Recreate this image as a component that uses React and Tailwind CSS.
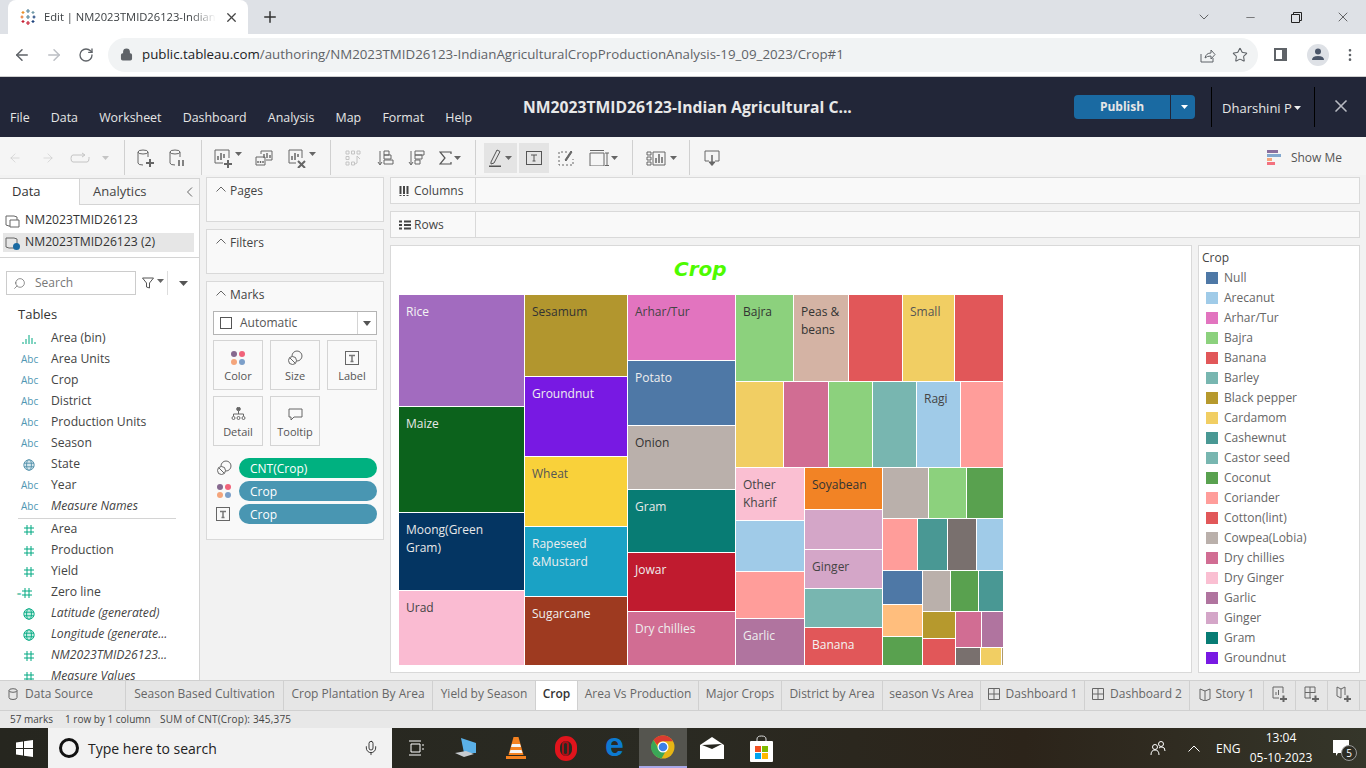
import { Minus, X, ChevronDown, ArrowLeft, ArrowRight, RotateCw, Lock, Star, MoreVertical, Plus, Search, Mic } from "lucide-react";

/* ---------- Treemap data ---------- */
const col1 = [
  { t: "Rice", c: "h-[111px] bg-[#a26bbf] text-[#f4f4f4]" },
  { t: "Maize", c: "h-[105px] bg-[#0c621c] text-[#e8e8e8]" },
  { t: "Moong(Green Gram)", c: "h-[77px] bg-[#043562] text-[#e8e8e8]" },
  { t: "Urad", c: "h-[74px] bg-[#fabbd2] text-[#444]" },
];
const col2 = [
  { t: "Sesamum", c: "h-[81px] bg-[#b2962e] text-[#333]" },
  { t: "Groundnut", c: "h-[79px] bg-[#7819e3] text-[#eee]" },
  { t: "Wheat", c: "h-[69px] bg-[#f9d13a] text-[#555]" },
  { t: "Rapeseed &Mustard", c: "h-[69px] bg-[#1aa2c5] text-[#eee]" },
  { t: "Sugarcane", c: "h-[68px] bg-[#9e3a20] text-[#eee]" },
];
const col3 = [
  { t: "Arhar/Tur", c: "h-[65px] bg-[#e274bf] text-[#444]" },
  { t: "Potato", c: "h-[64px] bg-[#4e78a6] text-[#eee]" },
  { t: "Onion", c: "h-[63px] bg-[#bab0ab] text-[#333]" },
  { t: "Gram", c: "h-[62px] bg-[#087c74] text-[#e8e8e8]" },
  { t: "Jowar", c: "h-[58px] bg-[#c01b2f] text-[#eee]" },
  { t: "Dry chillies", c: "h-[53px] bg-[#d16d93] text-[#eee]" },
];
const row1 = [
  { t: "Bajra", c: "w-[57px] bg-[#8cd17d] text-[#333]" },
  { t: "Peas & beans", c: "w-[54px] bg-[#d4b3a4] text-[#333]" },
  { t: "", c: "w-[53px] bg-[#e15759]" },
  { t: "Small", c: "w-[51px] bg-[#f1ce63] text-[#555]" },
  { t: "", c: "w-[48px] bg-[#e15759]" },
];
const row2 = [
  { t: "", c: "w-[47px] bg-[#f1ce63]" },
  { t: "", c: "w-[44px] bg-[#d16d93]" },
  { t: "", c: "w-[43px] bg-[#8cd17d]" },
  { t: "", c: "w-[43px] bg-[#78b6b0]" },
  { t: "Ragi", c: "w-[43px] bg-[#a0cbe8] text-[#444]" },
  { t: "", c: "w-[42px] bg-[#ff9d9a]" },
];
const colA = [
  { t: "Other Kharif", c: "h-[52px] bg-[#fabfd2] text-[#444]" },
  { t: "", c: "h-[50px] bg-[#a0cbe8]" },
  { t: "", c: "h-[46px] bg-[#ff9d9a]" },
  { t: "Garlic", c: "h-[46px] bg-[#b0749f] text-[#eee]" },
];
const colB = [
  { t: "Soyabean", c: "h-[41px] bg-[#f28325] text-[#333]" },
  { t: "", c: "h-[39px] bg-[#d4a6c8]" },
  { t: "Ginger", c: "h-[38px] bg-[#d4a6c8] text-[#444]" },
  { t: "", c: "h-[38px] bg-[#78b6b0]" },
  { t: "Banana", c: "h-[37px] bg-[#e15759] text-[#f4f4f4]" },
];

/* ---------- Legend + field list ---------- */
const legend = [
  ["Null", "bg-[#4e78a6]"], ["Arecanut", "bg-[#a0cbe8]"], ["Arhar/Tur", "bg-[#e274bf]"], ["Bajra", "bg-[#8cd17d]"],
  ["Banana", "bg-[#e15759]"], ["Barley", "bg-[#78b6b0]"], ["Black pepper", "bg-[#b6992d]"], ["Cardamom", "bg-[#f1ce63]"],
  ["Cashewnut", "bg-[#499894]"], ["Castor seed", "bg-[#78b6b0]"], ["Coconut", "bg-[#59a14f]"], ["Coriander", "bg-[#ff9d9a]"],
  ["Cotton(lint)", "bg-[#e15759]"], ["Cowpea(Lobia)", "bg-[#bab0ab]"], ["Dry chillies", "bg-[#d16d93]"], ["Dry Ginger", "bg-[#fabfd2]"],
  ["Garlic", "bg-[#b0749f]"], ["Ginger", "bg-[#d4a6c8]"], ["Gram", "bg-[#087c74]"], ["Groundnut", "bg-[#7819e3]"],
];
const dims = [
  ["bin", "Area (bin)"], ["abc", "Area Units"], ["abc", "Crop"], ["abc", "District"], ["abc", "Production Units"],
  ["abc", "Season"], ["globe", "State"], ["abc", "Year"], ["abc", "Measure Names", true],
];
const measures = [
  ["hash", "Area"], ["hash", "Production"], ["hash", "Yield"], ["calc", "Zero line"],
  ["globeg", "Latitude (generated)", true], ["globeg", "Longitude (generate...", true],
  ["hash", "NM2023TMID26123...", true], ["hash", "Measure Values", true],
];
const sheetTabs = [
  ["Season Based Cultivation", "w-[158px]"], ["Crop Plantation By Area", "w-[149px]"], ["Yield by Season", "w-[103px]"],
  ["Crop", "w-[42px]", true], ["Area Vs Production", "w-[121px]"], ["Major Crops", "w-[83px]"],
  ["District by Area", "w-[101px]"], ["season Vs Area", "w-[98px]"],
];

/* ---------- Small drawings ---------- */
const Tile = ({ t, c }) => (
  <div className={`${c} px-[7px] pt-2 text-[12px] leading-[18px] overflow-hidden`}>{t}</div>
);
const Block = ({ c }) => <div className={c} />;
const Caret = ({ c = "fill-[#666]" }) => (
  <svg width="7" height="4" viewBox="0 0 7 4" className="ml-[2px]"><path d="M0 0h7L3.5 4z" className={c} /></svg>
);
const Sep = () => <div className="w-px h-[35px] self-end bg-[#d0d0d0]" />;
const Slot = ({ w, children }) => <div className={`${w} flex justify-center items-center`}>{children}</div>;
const Ico = ({ w = 20, h = 20, v, s = "#666", children }) => (
  <svg width={w} height={h} viewBox={v || `0 0 ${w} ${h}`} fill="none" stroke={s} strokeWidth="1">{children}</svg>
);
const Dots = () => (
  <svg width="16" height="16" viewBox="0 0 16 16">
    <circle cx="4" cy="4" r="3" fill="#86698f" /><circle cx="12" cy="4" r="3" fill="#f1637a" />
    <circle cx="4" cy="12" r="3" fill="#f4a57c" /><circle cx="12" cy="12" r="3" fill="#7c9fc9" />
  </svg>
);
const SizeIco = () => (
  <Ico w={16} h={16}>
    <circle cx="10" cy="6" r="5" /><circle cx="5.5" cy="10.5" r="4" fill="#f9f9f9" /><path d="M3 8l5 5" />
  </Ico>
);
const TIco = () => (
  <Ico w={15} h={15}>
    <rect x=".5" y=".5" width="13" height="13" /><path d="M4 4.5h6M7 4.5v6M5.5 10.5h3" strokeWidth="1.5" stroke="#777" />
  </Ico>
);
const Hash = ({ c = "#00a881" }) => (
  <Ico w={10} h={10} s={c}><path d="M3 0v10M7 0v10M0 3h10M0 7h10" /></Ico>
);
const Globe = ({ c, f }) => (
  <svg width="12" height="12" viewBox="0 0 12 12" fill={f} stroke={c} strokeWidth=".9">
    <circle cx="6" cy="6" r="5.2" /><ellipse cx="6" cy="6" rx="2.4" ry="5.2" /><path d="M1 4.2h10M1 7.8h10" />
  </svg>
);
const FieldIcon = ({ k }) => {
  if (k === "abc") return <span className="text-[10px] text-[#4f97b3] w-4 text-center">Abc</span>;
  if (k === "globe") return <Globe c="#4f8fa9" f="#d8e8ee" />;
  if (k === "globeg") return <Globe c="#00a881" f="#c8efe4" />;
  if (k === "bin")
    return <Ico w={14} h={10} s="#00a881"><path d="M1 10V8M4 10V5M7 10V1M10 10V4M13 10V8" /></Ico>;
  if (k === "calc")
    return (
      <span className="flex items-center -ml-[9px]">
        <span className="text-[8px] leading-none text-[#00a881] mr-[1px]">=</span><Hash />
      </span>
    );
  return <Hash />;
};
const Chevron = () => (
  <svg width="10" height="6" viewBox="0 0 10 6" fill="none" stroke="#666" strokeWidth="1"><path d="M.5 5.5L5 1l4.5 4.5" /></svg>
);
const CylPlus = ({ mark }) => (
  <Ico w={18} h={18}>
    <ellipse cx="6" cy="3" rx="5" ry="2" /><path d="M1 3v11q0 2 5 2M11 3v5" />
    {mark === "plus" && <path d="M9 14h8M13 10v8" strokeWidth="2" />}
    {mark === "pause" && <path d="M10 11v6M14 11v6" strokeWidth="1.6" />}
  </Ico>
);
const Favicon = () => (
  <svg width="16" height="16" viewBox="0 0 16 16" strokeWidth="1.2" fill="none">
    <path d="M8 0v4M6 2h4" stroke="#5b879b" /><path d="M3 2v3M1.5 3.5h3" stroke="#eb912b" /><path d="M13 2v3M11.5 3.5h3" stroke="#7099a6" />
    <path d="M8 6v4M6 8h4" stroke="#59879b" /><path d="M2 6.5v3M.5 8h3" stroke="#e8762b" /><path d="M14 6.5v3M12.5 8h3" stroke="#1f447e" />
    <path d="M3 11v3M1.5 12.5h3" stroke="#c72035" /><path d="M8 12v4M6 14h4" stroke="#c72035" /><path d="M13 11v3M11.5 12.5h3" stroke="#1f447e" />
  </svg>
);
const MiniTab = ({ children }) => (
  <div className="w-[32px] h-full pb-[3px] flex items-center justify-center border-r border-[#d0d0d0]">{children}</div>
);
const TaskSlot = ({ w = "w-[49px]", c = "", children }) => (
  <div className={`${w} ${c} h-full flex items-center justify-center`}>{children}</div>
);

export default function App() {
  return (
    <div className="w-[1366px] h-[768px] overflow-hidden flex flex-col bg-white font-['Open_Sans',sans-serif]">

      {/* Browser tabs */}
      <div className="h-[34px] bg-[#dee1e6] flex items-end shrink-0">
        <div className="ml-2 w-[240px] h-full bg-white rounded-t-lg flex items-center pl-3 text-[#3c4043]">
          <Favicon />
          <span className="ml-2 w-[172px] overflow-hidden whitespace-nowrap text-[11.2px] [mask-image:linear-gradient(to_right,black_85%,transparent)]">
            Edit | NM2023TMID26123-Indian Agricultural
          </span>
          <X size={15} strokeWidth={2} className="ml-2 text-[#444]" />
        </div>
        <Plus size={18} strokeWidth={2} className="ml-[13px] mb-2 text-[#333]" />
        <div className="ml-auto h-full flex items-center text-[#222]">
          <ChevronDown size={16} strokeWidth={1} className="mr-[32px]" />
          <Minus size={13} strokeWidth={1} className="mr-[34px]" />
          <svg width="11" height="11" viewBox="0 0 11 11" fill="none" stroke="#222" className="mr-[33px]">
            <path d="M.5 2.5h8v8h-8zM2.5 2.5v-2h8v8h-2" />
          </svg>
          <X size={16} strokeWidth={1} className="mr-[15px]" />
        </div>
      </div>

      {/* Address bar */}
      <div className="h-[43px] bg-white border-b border-[#cfcfcf] flex items-center shrink-0 pb-[1px]">
        <ArrowLeft size={18} strokeWidth={2} className="ml-[13px] text-[#5f6368]" />
        <ArrowRight size={18} strokeWidth={2} className="ml-[14px] text-[#bcbfc4]" />
        <RotateCw size={16} strokeWidth={2} className="ml-[15px] text-[#5f6368]" />
        <div className="ml-[14px] w-[1150px] h-[34px] rounded-full bg-[#f1f3f4] flex items-center pl-[12px]">
          <Lock size={13} strokeWidth={2.5} className="text-[#5f6368] fill-[#5f6368]" />
          <span className="ml-[9px] text-[13.3px] whitespace-nowrap text-[#5f6368]">
            <span className="text-[#202124]">public.tableau.com</span>/authoring/NM2023TMID26123-IndianAgriculturalCropProductionAnalysis-19_09_2023/Crop#1
          </span>
          <div className="ml-auto flex items-center pr-[10px]">
            <Ico w={16} h={16} s="#5f6368"><path d="M1 7v8h12v-4M5 11q1-5 6-5V3l4 4.5-4 4.5V9q-4 0-6 2z" /></Ico>
            <Star size={16} strokeWidth={1.6} className="ml-[16px] text-[#5f6368]" />
          </div>
        </div>
        <div className="ml-[16px] w-[13px] h-[13px] border-2 border-[#5f6368] border-r-[5px]" />
        <div className="ml-[20px] w-[22px] h-[22px] rounded-full bg-[#dee1e6] flex items-center justify-center">
          <svg width="12" height="13" viewBox="0 0 12 13" fill="#4a5568"><circle cx="6" cy="3.5" r="3" /><path d="M0 12q0-4 6-4t6 4z" /></svg>
        </div>
        <MoreVertical size={16} strokeWidth={2} className="ml-[13px] text-[#5f6368]" />
      </div>

      {/* Tableau header */}
      <div className="h-[60px] bg-[#222638] flex shrink-0">
        <div className="w-[523px] pl-[10px] pt-[33px] flex gap-[21.2px] text-[12.4px] leading-4 text-[#e6e6e6]">
          {["File", "Data", "Worksheet", "Dashboard", "Analysis", "Map", "Format", "Help"].map((m) => (
            <span key={m}>{m}</span>
          ))}
        </div>
        <div className="w-[551px] pt-[20px] text-[15.7px] leading-5 font-bold text-[#e8e8e8] whitespace-nowrap">
          NM2023TMID26123-Indian Agricultural C...
        </div>
        <div className="flex items-start text-[#e6e6e6]">
          <div className="mt-[18px] w-[96px] h-6 bg-[#1a6aa2] rounded-l-sm flex items-center justify-center text-[12px] font-bold">
            Publish
          </div>
          <div className="mt-[18px] ml-px w-6 h-6 bg-[#1a6aa2] rounded-r-sm flex items-center justify-center">
            <Caret c="fill-white" />
          </div>
          <div className="mt-[10px] ml-4 w-px h-10 bg-black" />
          <div className="mt-[23px] ml-[10px] w-[92px] flex items-center text-[13px] leading-4 whitespace-nowrap">
            Dharshini P<Caret c="fill-[#eee]" />
          </div>
          <div className="mt-[10px] w-px h-10 bg-black" />
          <X size={20} strokeWidth={2} className="mt-[19px] ml-[16px] text-[#b8bac2]" />
        </div>
      </div>

      {/* Toolbar */}
      <div className="h-[38px] pt-[4px] bg-[#f5f5f5] flex items-center shrink-0">
        <Slot w="w-[30px]"><ArrowLeft size={14} strokeWidth={1} className="text-[#c4c4c4]" /></Slot>
        <Slot w="w-[36px]"><ArrowRight size={14} strokeWidth={1} className="text-[#c4c4c4]" /></Slot>
        <Slot w="w-[28px]">
          <Ico w={20} h={12} s="#c4c4c4"><path d="M14 3H3q-2 0-2 3.500t2 3.500h14q2 0 2-3.500V5M12 1l3 2-3 2" /></Ico>
        </Slot>
        <Slot w="w-[20px]"><Caret c="fill-[#c4c4c4]" /></Slot>
        <div className="w-[10px]" /><Sep />
        <Slot w="w-[42px]"><CylPlus mark="plus" /></Slot>
        <Slot w="w-[22px]"><CylPlus mark="pause" /></Slot>
        <div className="w-[12px]" /><Sep />
        <Slot w="w-[52px]">
          <Ico w={19} h={19}><path d="M9 14H1V1h14v8" /><path d="M4 11V7M7 11V4M10 9V5" strokeWidth="1.500" /><path d="M10 15h8M14 11v8" strokeWidth="2" /></Ico>
          <span className="-mt-2"><Caret /></span>
        </Slot>
        <Slot w="w-[20px]">
          <Ico w={18} h={16}><path d="M6 4V1h11v9H11" /><path d="M1 7h9v8H1z" /><path d="M9 8V4M12 8V3M15 8V5M3 13v-2M5.500 13v-2M8 13v-2" strokeWidth="1.400" /></Ico>
        </Slot>
        <Slot w="w-[56px]">
          <Ico w={19} h={19}><path d="M8 14H1V1h13v8" /><path d="M4 11V7M7 11V4M10 8V5" strokeWidth="1.500" /><path d="M10 12l7 7M17 12l-7 7" strokeWidth="2" /></Ico>
          <span className="-mt-2"><Caret /></span>
        </Slot>
        <Sep />
        <Slot w="w-[44px]">
          <Ico w={17} h={16} s="#c4c4c4"><path d="M1 1h3v3H1zM6.500 1h3v3h-3zM12 1h3v3h-3zM1 6.500h3v3H1zM1 12h3v3H1zM6.500 12h3v3h-3zM12 6v7l-2 1M15 9l-3-3" /></Ico>
        </Slot>
        <Slot w="w-[20px]">
          <Ico w={17} h={16}><path d="M3 1v13M1 12l2 3 2-3" /><path d="M7 1h5v4H7zM7 5h7v4H7zM7 10h9v4H7z" /></Ico>
        </Slot>
        <Slot w="w-[43px]">
          <Ico w={17} h={16}><path d="M3 1v13M1 12l2 3 2-3" /><path d="M7 1h9v4H7zM7 5h7v4H7zM7 10h5v4H7z" /></Ico>
        </Slot>
        <Slot w="w-[24px]">
          <Ico w={13} h={14} s="#555"><path d="M12 3V1H1l5 6-5 6h11v-2" strokeWidth="1.200" /></Ico>
          <Caret />
        </Slot>
        <div className="w-[13px]" /><Sep />
        <div className="ml-2 w-[33px] h-[30px] bg-[#e4e4e4] flex items-center justify-center">
          <Ico w={14} h={18} s="#555"><path d="M2 13L8 1l3 1.500L5 14l-3 1z" /><path d="M0 17.500h12" strokeWidth="2" /></Ico>
          <Caret />
        </div>
        <div className="ml-[2px] w-[30px] h-[30px] bg-[#e4e4e4] flex items-center justify-center">
          <Ico w={16} h={14} s="#555"><rect x=".5" y=".5" width="15" height="13" /><path d="M5 4h6M8 4v6M6.500 10h3" /></Ico>
        </div>
        <Slot w="w-[34px]">
          <Ico w={16} h={16} s="#666"><path d="M9 2H1v13h14V9" strokeDasharray="2 2" /><path d="M7 10l6-9 1 1-6 9z" fill="#666" /></Ico>
        </Slot>
        <Slot w="w-[40px]">
          <Ico w={20} h={16}><path d="M1 3h14v13H1zM1 .5h14M18 3v13M16 3h4M16 15.500h4" /></Ico>
          <Caret />
        </Slot>
        <div className="w-[9px]" /><Sep />
        <Slot w="w-[56px]">
          <Ico w={20} h={15}><path d="M1 1h4v3H1zM1 6h4v3H1zM1 11h4v3H1zM7 1h12v13H7z" /><path d="M10 12V7M13 12V3M16 12V6" strokeWidth="1.500" /></Ico>
          <span className="ml-[2px]"><Caret /></span>
        </Slot>
        <Sep />
        <Slot w="w-[44px]">
          <Ico w={16} h={16}><path d="M5 11H1V1h14v10h-4" /><path d="M8 5v10" strokeWidth="1.500" /><path d="M5 12l3 3.500 3-3.500z" fill="#666" /></Ico>
        </Slot>
        <div className="ml-auto mr-6 flex items-center">
          <svg width="14" height="16" viewBox="0 0 14 16" className="mr-[10px]">
            <rect width="11" height="3" fill="#8a6f9e" /><rect y="4" width="14" height="3" fill="#83a8cf" />
            <rect y="8" width="5" height="3" fill="#f4a57c" /><rect y="12" width="8" height="3" fill="#f3717f" />
          </svg>
          <span className="text-[12px] text-[#555]">Show Me</span>
        </div>
      </div>

      {/* Workspace */}
      <div className="flex-1 min-h-0 flex bg-[#f2f2f2]">

        {/* Data pane */}
        <div className="w-[200px] mt-[3px] bg-white border-r border-t border-[#d4d4d4] flex flex-col overflow-hidden shrink-0">
          <div className="h-[26px] flex shrink-0 text-[13px]">
            <div className="w-[79px] pl-3 flex items-center text-[#333] font-medium">Data</div>
            <div className="flex-1 bg-[#f5f5f5] border-l border-b border-[#d4d4d4] pl-[13px] flex items-center text-[#444]">
              Analytics
              <svg width="6" height="10" viewBox="0 0 6 10" fill="none" stroke="#666" className="ml-auto mr-[6px]"><path d="M5 .5L.5 5 5 9.500" /></svg>
            </div>
          </div>
          <div className="h-[53px] border-b border-[#d4d4d4] pt-[6px] pl-[3px] pr-[5px] shrink-0 text-[12.2px] text-[#333]">
            <div className="h-[19px] flex items-center pl-[2px] mb-[3px]">
              <Ico w={15} h={15}><path d="M1 3h8l3 1v9H4l-3-1z" /><path d="M5 7h9v7H5z" fill="#fff" /></Ico>
              <span className="ml-[5px]">NM2023TMID26123</span>
            </div>
            <div className="h-[19px] bg-[#e6e6e6] flex items-center pl-[2px] relative">
              <Ico w={15} h={15}><path d="M1 3h8l3 1v9H4l-3-1z" /></Ico>
              <span className="absolute left-[10px] top-[10px] w-[7px] h-[7px] rounded-full bg-[#1a6aa2]" />
              <span className="ml-[5px]">NM2023TMID26123 (2)</span>
            </div>
          </div>
          <div className="flex items-center pl-[6px] mt-[13px] shrink-0">
            <div className="w-[130px] h-6 border border-[#ccc] flex items-center pl-[6px] text-[12px] text-[#777]">
              <Search size={13} strokeWidth={1.200} className="-scale-x-100 text-[#555]" />
              <span className="ml-[9px]">Search</span>
            </div>
            <span className="ml-[6px] flex items-center">
              <Ico w={13} h={12} s="#555"><path d="M.5 1h11L7.500 6v5l-3-1V6z" /></Ico>
              <span className="-mt-1"><Caret /></span>
            </span>
            <div className="ml-[3px] w-px h-6 bg-[#ddd]" />
            <span className="ml-[11px]"><svg width="9" height="5" viewBox="0 0 9 5"><path d="M0 0h9L4.500 5z" fill="#555" /></svg></span>
          </div>
          <div className="pl-[18px] mt-[9px] text-[13px] leading-5 text-[#333] font-medium shrink-0">Tables</div>
          <div className="mt-[4px] text-[12.2px] text-[#444] shrink-0">
            {dims.map(([k, name, it]) => (
              <div key={name} className="h-[21px] flex items-center">
                <div className="w-[51px] pl-[21px] pr-[14px] flex justify-center items-center"><FieldIcon k={k} /></div>
                <span className={it ? "italic" : ""}>{name}</span>
              </div>
            ))}
            <div className="ml-[18px] mr-[23px] mt-[1px] h-px bg-[#d4d4d4]" />
            {measures.map(([k, name, it]) => (
              <div key={name} className="h-[21px] flex items-center">
                <div className="w-[51px] pl-[21px] pr-[14px] flex justify-center items-center"><FieldIcon k={k} /></div>
                <span className={it ? "italic" : ""}>{name}</span>
              </div>
            ))}
          </div>
        </div>

        {/* Cards */}
        <div className="w-[178px] ml-[6px] mt-[2px] flex flex-col gap-[7px] text-[12px] text-[#555] shrink-0">
          {["Pages", "Filters"].map((n) => (
            <div key={n} className="h-[45px] bg-[#f9f9f9] border border-[#d9d9d9] pl-[9px] pt-[3px] flex items-start">
              <span className="mt-[5px]"><Chevron /></span>
              <span className="ml-[4px] text-[#444] leading-5">{n}</span>
            </div>
          ))}
          <div className="h-[259px] bg-[#f9f9f9] border border-[#d9d9d9] px-[6px] pt-[3px]">
            <div className="flex items-start pl-[3px]">
              <span className="mt-[5px]"><Chevron /></span>
              <span className="ml-[4px] text-[#444] leading-5">Marks</span>
            </div>
            <div className="mt-[6px] h-6 border border-[#b4b4b4] bg-white flex items-center pl-[6px]">
              <div className="w-3 h-3 border border-[#555]" />
              <span className="ml-2 text-[#555]">Automatic</span>
              <div className="ml-auto w-[19px] h-full border-l border-[#d4d4d4] flex items-center justify-center">
                <svg width="8" height="5" viewBox="0 0 8 5"><path d="M0 0h8L4 5z" fill="#555" /></svg>
              </div>
            </div>
            <div className="mt-[5px] grid grid-cols-[50px_50px_50px] gap-x-[7px] gap-y-[6px] text-[11px]">
              {[
                ["Color", <Dots key="a" />], ["Size", <SizeIco key="b" />], ["Label", <TIco key="c" />],
                ["Detail", <svg key="d" width="15" height="14" viewBox="0 0 15 14" fill="none" stroke="#666"><circle cx="7.500" cy="2" r="1.800" fill="#666" /><path d="M7.500 4v3M2.500 9V7h10v2" /><circle cx="2.500" cy="11" r="1.500" /><circle cx="7.500" cy="11" r="1.500" /><circle cx="12.500" cy="11" r="1.500" /></svg>],
                ["Tooltip", <Ico key="e" w={15} h={13}><path d="M1 1h13v8H6l-3 3V9H1z" /></Ico>],
              ].map(([l, ic]) => (
                <div key={l} className="h-[50px] border border-[#d4d4d4] flex flex-col items-center">
                  <div className="h-[18px] mt-2 flex items-center">{ic}</div>
                  <span className="mt-[1px] leading-4 text-[#555]">{l}</span>
                </div>
              ))}
            </div>
            <div className="mt-3 flex flex-col gap-[3px] text-white">
              {[
                [<SizeIco key="a" />, "CNT(Crop)", "bg-[#00b180]"],
                [<Dots key="b" />, "Crop", "bg-[#4996b2]"],
                [<TIco key="c" />, "Crop", "bg-[#4996b2]"],
              ].map(([ic, l, c], i) => (
                <div key={i} className="flex items-center">
                  <div className="w-[26px] flex justify-start pl-[3px]">{ic}</div>
                  <div className={`${c} w-[138px] h-5 rounded-full pl-[11px] pt-[1px] flex items-center`}>{l}</div>
                </div>
              ))}
            </div>
          </div>
        </div>

        {/* Shelves and view */}
        <div className="w-[970px] ml-[6px] mt-[2px] flex flex-col text-[12px] text-[#444] shrink-0">
          <div className="h-[27px] bg-[#f9f9f9] border border-[#d9d9d9] flex items-center">
            <div className="w-[85px] h-full border-r border-[#d9d9d9] pl-2 flex items-center">
              <Ico w={10} h={10} s="#444"><path d="M1.500 0v10M5 0v10M8.500 0v10" strokeWidth="2" strokeDasharray="8 1" /></Ico>
              <span className="ml-[5px]">Columns</span>
            </div>
          </div>
          <div className="mt-[7px] h-[27px] bg-[#f9f9f9] border border-[#d9d9d9] flex items-center">
            <div className="w-[85px] h-full border-r border-[#d9d9d9] pl-2 flex items-center">
              <Ico w={12} h={10} s="#444"><path d="M0 1.500h3M5 1.500h7M0 5h3M5 5h7M0 8.500h3M5 8.500h7" strokeWidth="2" /></Ico>
              <span className="ml-[3px]">Rows</span>
            </div>
          </div>

          <div className="mt-[7px] h-[428px] flex gap-[6px]">
            <div className="w-[802px] bg-white border border-[#d9d9d9] pl-2 flex flex-col">
              <div className="h-[49px] pl-[275px] pt-[9px] text-[20px] leading-7 font-bold italic text-[#4efb00] font-['DejaVu_Sans',sans-serif]">
                Crop
              </div>
              <div className="w-[604px] h-[370px] flex gap-px">
                <div className="w-[125px] flex flex-col gap-px">{col1.map((d, i) => <Tile key={i} {...d} />)}</div>
                <div className="w-[102px] flex flex-col gap-px">{col2.map((d, i) => <Tile key={i} {...d} />)}</div>
                <div className="w-[107px] flex flex-col gap-px">{col3.map((d, i) => <Tile key={i} {...d} />)}</div>
                <div className="w-[267px] flex flex-col gap-px">
                  <div className="h-[86px] flex gap-px">{row1.map((d, i) => <Tile key={i} {...d} />)}</div>
                  <div className="h-[85px] flex gap-px">{row2.map((d, i) => <Tile key={i} {...d} />)}</div>
                  <div className="h-[197px] flex gap-px">
                    <div className="w-[68px] flex flex-col gap-px">{colA.map((d, i) => <Tile key={i} {...d} />)}</div>
                    <div className="w-[77px] flex flex-col gap-px">{colB.map((d, i) => <Tile key={i} {...d} />)}</div>
                    <div className="w-[120px] flex flex-col gap-px">
                      <div className="h-[50px] flex gap-px">
                        <Block c="w-[45px] bg-[#bab0ab]" /><Block c="w-[37px] bg-[#8cd17d]" /><Block c="w-[36px] bg-[#59a14f]" />
                      </div>
                      <div className="h-[51px] flex gap-px">
                        <Block c="w-[34px] bg-[#ff9d9a]" /><Block c="w-[29px] bg-[#499894]" /><Block c="w-[28px] bg-[#79706e]" /><Block c="w-[26px] bg-[#a0cbe8]" />
                      </div>
                      <div className="h-[94px] flex gap-px">
                        <div className="w-[39px] flex flex-col gap-px">
                          <Block c="h-[33px] bg-[#4e78a6]" /><Block c="h-[31px] bg-[#ffbe7d]" /><Block c="h-[28px] bg-[#59a14f]" />
                        </div>
                        <div className="w-[80px] flex flex-col gap-px">
                          <div className="h-[40px] flex gap-px">
                            <Block c="w-[27px] bg-[#bab0ab]" /><Block c="w-[27px] bg-[#59a14f]" /><Block c="w-[24px] bg-[#499894]" />
                          </div>
                          <div className="h-[53px] flex gap-px">
                            <div className="w-[32px] flex flex-col gap-px">
                              <Block c="h-[26px] bg-[#b6992d]" /><Block c="h-[26px] bg-[#e15759]" />
                            </div>
                            <div className="w-[47px] flex flex-col gap-px">
                              <div className="h-[35px] flex gap-px">
                                <Block c="w-[25px] bg-[#d16d93]" /><Block c="w-[21px] bg-[#b0749f]" />
                              </div>
                              <div className="h-[17px] flex gap-px">
                                <Block c="w-[24px] bg-[#79706e]" /><Block c="w-[20px] bg-[#f1ce63]" /><Block c="w-px bg-[#b09a6e]" />
                              </div>
                            </div>
                          </div>
                        </div>
                      </div>
                    </div>
                  </div>
                </div>
              </div>
            </div>

            <div className="w-[162px] bg-white border border-[#d9d9d9] pl-[3px] pt-[2px] overflow-hidden">
              <div className="text-[12px] leading-5 text-[#444]">Crop</div>
              {legend.map(([n, c]) => (
                <div key={n} className="h-5 flex items-center pl-[4px] text-[12px] text-[#666]">
                  <div className={`${c} w-3 h-3`} />
                  <span className="ml-[6px]">{n}</span>
                </div>
              ))}
            </div>
          </div>
        </div>
      </div>

      {/* Sheet tabs */}
      <div className="h-[31px] bg-[#e6e6e6] border-y border-[#d0d0d0] flex shrink-0 text-[12px] text-[#666]">
        <div className="w-[126px] h-full pb-[3px] border-r border-[#d0d0d0] pl-2 flex items-center">
          <Ico w={10} h={12} s="#666"><ellipse cx="5" cy="2.500" rx="4" ry="1.800" /><path d="M1 2.500v7q0 2 4 2t4-2v-7" /></Ico>
          <span className="ml-[7px]">Data Source</span>
        </div>
        {sheetTabs.map(([n, w, on]) => (
          <div key={n} className={`${w} h-full pb-[3px] border-r border-[#d0d0d0] flex items-center justify-center whitespace-nowrap ${on ? "bg-white font-semibold text-[#333]" : ""}`}>
            {n}
          </div>
        ))}
        {[["Dashboard 1", "w-[104px]"], ["Dashboard 2", "w-[105px]"]].map(([n, w]) => (
          <div key={n} className={`${w} h-full pb-[3px] border-r border-[#d0d0d0] flex items-center justify-center whitespace-nowrap`}>
            <Ico w={12} h={12} s="#666"><path d="M.5.500h11v11H.500zM6 .500v11M.500 6h11" /></Ico>
            <span className="ml-[6px]">{n}</span>
          </div>
        ))}
        <div className="w-[74px] h-full pb-[3px] border-r border-[#d0d0d0] flex items-center justify-center">
          <Ico w={12} h={13} s="#666"><path d="M1 1l5 2 5-2v10l-5 2-5-2zM6 3v10" /></Ico>
          <span className="ml-[5px]">Story 1</span>
        </div>
        <MiniTab><Ico w={16} h={16}><path d="M7 12H1V1h10v6" /><path d="M4 9V6M6.500 9V4" /><path d="M8 13h7M11.500 9.500v7" strokeWidth="2" /></Ico></MiniTab>
        <MiniTab><Ico w={16} h={16}><path d="M7 12H1V1h10v6M6 1v11M1 6.500h10" /><path d="M8 13h7M11.500 9.500v7" strokeWidth="2" /></Ico></MiniTab>
        <MiniTab><Ico w={16} h={16}><path d="M1 1l4 2 4-2v8M5 3v9l-4-2V1" /><path d="M8 13h7M11.500 9.500v7" strokeWidth="2" /></Ico></MiniTab>
      </div>

      {/* Status bar */}
      <div className="h-[17px] bg-[#e8e8e8] flex items-center pl-[10px] shrink-0 text-[10px] text-[#444]">
        <span className="w-[55px]">57 marks</span>
        <span className="w-[95px]">1 row by 1 column</span>
        <span className="tracking-[0.2px]">SUM of CNT(Crop): 345,375</span>
      </div>

      {/* Windows taskbar */}
      <div className="h-[40px] flex items-center shrink-0 bg-[linear-gradient(to_right,#26261f,#2a2a22_50%,#2c241a_75%,#35362a)] text-white">
        <TaskSlot w="w-[48px]">
          <svg width="17" height="17" viewBox="0 0 17 17" fill="#fff"><path d="M0 2.500l7-1V8H0zM8 1.300L17 0v8H8zM0 9h7v6.500l-7-1zM8 9h9v8l-9-1.300z" /></svg>
        </TaskSlot>
        <div className="w-[344px] h-full bg-[#f2f2f2] flex items-center pl-[11px] text-[#222]">
          <div className="w-[20px] h-[20px] rounded-full border-[3px] border-[#111]" />
          <span className="ml-[9px] text-[14px]">Type here to search</span>
          <Mic size={16} strokeWidth={1.300} className="ml-auto mr-[13px]" />
        </div>
        <TaskSlot w="w-[48px]">
          <Ico w={16} h={16} s="#fff"><path d="M3 4h9v8H3zM1 1h12M1 15h12M15 4v2M15 8v2" /></Ico>
        </TaskSlot>
        <TaskSlot w="w-[51px]">
          <svg width="24" height="22" viewBox="0 0 24 22"><path d="M7 1l15 5v10H10z" fill="#5ab0e8" /><path d="M1 16l11-2 8 3-10 3z" fill="#c8ccd0" /></svg>
        </TaskSlot>
        <TaskSlot w="w-[50px]">
          <svg width="20" height="24" viewBox="0 0 20 24"><path d="M7.500 1h5l5 18h-15z" fill="#f58220" /><path d="M6 8h8l1 3H5zM4.500 14h11l1 3h-13z" fill="#f4f4f4" /><path d="M0 20h20v3H0z" fill="#f58220" /></svg>
        </TaskSlot>
        <TaskSlot w="w-[49px]">
          <div className="w-[22px] h-[25px] rounded-full border-[5px] border-[#e0141c] flex justify-center">
            <div className="w-[7px] h-full rounded-full border-2 border-[#a80f16]" />
          </div>
        </TaskSlot>
        <TaskSlot w="w-[49px]">
          <span className="text-[34px] leading-none font-bold text-[#0d7ad0] -mt-2 font-['Liberation_Sans',sans-serif]">e</span>
        </TaskSlot>
        <TaskSlot w="w-[48px]" c="bg-[#55554f] border-b-2 border-[#a8a8e8]">
          <svg width="24" height="24" viewBox="0 0 24 24">
            <circle cx="12" cy="12" r="11.500" fill="#e6b514" />
            <path d="M12 .500a11.500 11.500 0 0 1 10 5.700H12a6 6 0 0 0-5.700 4L2.500 5A11.500 11.500 0 0 1 12 .500z" fill="#d93b30" />
            <path d="M2.500 5l5 8.500a6 6 0 0 0 7 3L10.500 23.500A11.500 11.500 0 0 1 2.500 5z" fill="#3aa757" />
            <circle cx="12" cy="12" r="5.500" fill="#fff" /><circle cx="12" cy="12" r="4.300" fill="#3d80e6" />
          </svg>
        </TaskSlot>
        <TaskSlot w="w-[49px]">
          <svg width="24" height="22" viewBox="0 0 24 22"><path d="M0 8L12 0l12 8v14H0z" fill="#fff" /><path d="M2 8l20-1-10 5z" fill="#26261f" /></svg>
        </TaskSlot>
        <TaskSlot w="w-[50px]">
          <svg width="23" height="27" viewBox="0 0 23 27" fill="none">
            <path d="M7 8V4q0-3 4.500-3T16 4v4" stroke="#ddd" />
            <rect y="6" width="23" height="21" rx="1" fill="#fff" />
            <rect x="5" y="11" width="6" height="6" fill="#f25022" /><rect x="12" y="11" width="6" height="6" fill="#7fba00" />
            <rect x="5" y="18" width="6" height="6" fill="#00a4ef" /><rect x="12" y="18" width="6" height="6" fill="#ffb900" />
          </svg>
        </TaskSlot>
        <div className="ml-auto flex items-center h-full text-[12px]">
          <Ico w={16} h={16} s="#fff"><circle cx="5" cy="7" r="2.500" /><path d="M1 15q0-5 4-5t4 5" /><circle cx="11" cy="4" r="2.500" /><path d="M9 8q1-1 3-1 3 0 3 4" /></Ico>
          <svg width="12" height="7" viewBox="0 0 12 7" fill="none" stroke="#fff" className="ml-[22px]"><path d="M.5 6.500L6 1l5.500 5.500" /></svg>
          <span className="ml-[16px] w-[33px] pt-[1px]">ENG</span>
          <div className="w-[64px] text-center leading-[20px] text-[12px]">
            <div>13:04</div><div>05-10-2023</div>
          </div>
          <div className="w-[33px] ml-[11px] mr-[9px] relative h-full flex items-center justify-center">
            <svg width="16" height="16" viewBox="0 0 16 16"><path d="M0 0h16v13H5l-2 3v-3H0z" fill="#fff" /></svg>
            <span className="absolute left-[17px] top-[17px] w-[16px] h-[16px] rounded-full border border-[#999] bg-[#2c2c24] text-[10px] leading-[14px] text-center">5</span>
          </div>
        </div>
      </div>
    </div>
  );
}
